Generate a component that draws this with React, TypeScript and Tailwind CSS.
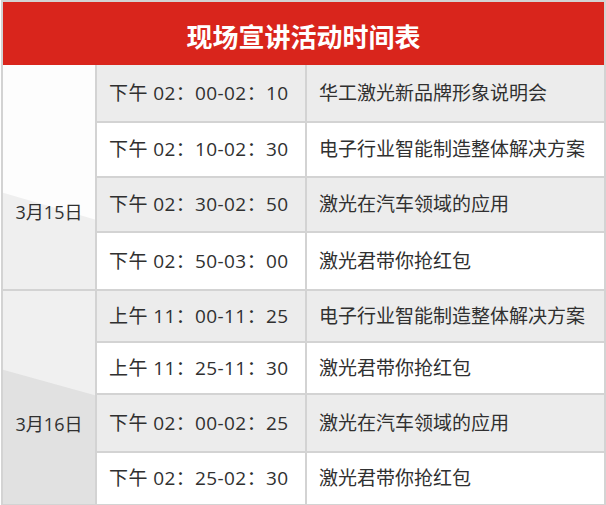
const groups = [
  {
    date: "3月15日",
    top: "bg-[#fdfdfd]",
    bottom: "bg-[#efefef]",
    clip: "[clip-path:polygon(0_57%,100%_69%,100%_100%,0_100%)]",
    pad: "pt-[135px]",
    rows: [
      { h: "h-[58px]", bg: "bg-[#ececec]", time: "下午 02：00-02：10", title: "华工激光新品牌形象说明会" },
      { h: "h-[55px]", bg: "bg-white", time: "下午 02：10-02：30", title: "电子行业智能制造整体解决方案" },
      { h: "h-[55px]", bg: "bg-[#ececec]", time: "下午 02：30-02：50", title: "激光在汽车领域的应用" },
      { h: "h-[56px]", bg: "bg-white", time: "下午 02：50-03：00", title: "激光君带你抢红包" },
    ],
  },
  {
    date: "3月16日",
    top: "bg-[#f0f0f0]",
    bottom: "bg-[#e1e1e1]",
    clip: "[clip-path:polygon(0_37%,100%_49%,100%_100%,0_100%)]",
    pad: "pt-[121px]",
    rows: [
      { h: "h-[52px]", bg: "bg-[#ececec]", time: "上午 11：00-11：25", title: "电子行业智能制造整体解决方案" },
      { h: "h-[52px]", bg: "bg-white", time: "上午 11：25-11：30", title: "激光君带你抢红包" },
      { h: "h-[58px]", bg: "bg-[#ececec]", time: "下午 02：00-02：25", title: "激光在汽车领域的应用" },
      { h: "h-[51px]", bg: "bg-white", time: "下午 02：25-02：30", title: "激光君带你抢红包" },
    ],
  },
];

export default function App() {
  return (
    <div
      className="w-[606px] h-[505px] bg-white text-[#303030]"
      style={{ fontFamily: '"Open Sans", "Noto Sans CJK SC", sans-serif' }}
    >
      <div className="ml-[1px] w-[605px] border-2 border-[#d3d3d3]">
        <div className="h-[63px] bg-[#d9251c] flex items-center justify-center pt-[6px]">
          <span className="text-[26px] font-bold text-white leading-none">现场宣讲活动时间表</span>
        </div>
        {groups.map((g, gi) => (
          <div
            key={g.date}
            className={`flex ${gi === 0 ? "border-b-2 border-[#d3d3d3]" : ""}`}
          >
            <div className={`relative w-[94px] shrink-0 border-r-2 border-[#d3d3d3] ${g.top}`}>
              <div className={`absolute inset-0 ${g.bottom} ${g.clip}`} />
              <div className={`relative text-center text-[18px] leading-6 ${g.pad}`}>{g.date}</div>
            </div>
            <div className="flex-1">
              {g.rows.map((r, ri) => (
                <div
                  key={ri}
                  className={`flex ${r.h} ${r.bg} ${ri < g.rows.length - 1 ? "border-b-2 border-[#d3d3d3]" : ""}`}
                >
                  <div className="w-[210px] shrink-0 border-r-2 border-[#d3d3d3] flex items-center pl-[12px] text-[19px] tracking-[0.4px]">
                    {r.time}
                  </div>
                  <div className="flex-1 flex items-center pl-[12px] text-[19px]">{r.title}</div>
                </div>
              ))}
            </div>
          </div>
        ))}
      </div>
    </div>
  );
}
